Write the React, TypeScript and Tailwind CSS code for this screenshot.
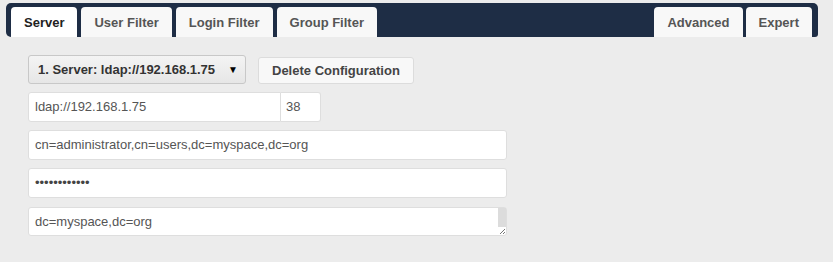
const LEFT_TABS = ['Server', 'User Filter', 'Login Filter', 'Group Filter'];
const RIGHT_TABS = ['Advanced', 'Expert'];

function Tab({ label, active }: { label: string; active?: boolean }) {
  return (
    <div
      className={`h-[30px] px-[13px] pt-[1px] flex items-center rounded-t-[4px] font-bold text-[13px] ${
        active ? 'bg-white text-[#222]' : 'bg-[#f8f8f8] text-[#555]'
      }`}
    >
      {label}
    </div>
  );
}

export default function App() {
  return (
    <div
      className="w-[833px] h-[262px] bg-[#ececec] pt-[3px] pl-[6px] pr-[15px]"
      style={{ fontFamily: '"Liberation Sans", Arial, sans-serif' }}
    >
      {/* Tab bar */}
      <div className="h-[34px] bg-[#1e2d45] rounded-[5px] rounded-br-[3px] flex items-end justify-between pl-[5px] pr-[6px]">
        <div className="flex gap-[4px]">
          {LEFT_TABS.map((t, i) => (
            <Tab key={t} label={t} active={i === 0} />
          ))}
        </div>
        <div className="flex gap-[3px]">
          {RIGHT_TABS.map(t => (
            <Tab key={t} label={t} />
          ))}
        </div>
      </div>

      {/* Form */}
      <div className="pl-[22px] pt-[18px] flex flex-col text-[13px] text-[#555]">
        <div className="flex items-center gap-[12px]">
          <div className="w-[218px] h-[29px] border border-[#c8c8c8] rounded-[3px] bg-gradient-to-b from-[#f4f4f4] to-[#e6e6e6] flex items-center justify-between pl-[9px] pr-[7px] font-bold text-[#333]">
            <span>1. Server: ldap://192.168.1.75</span>
            <span className="text-[10px] text-black">▼</span>
          </div>
          <div className="h-[27px] mt-[2px] px-[13px] border border-[#dcdcdc] rounded-[3px] bg-[#f8f8f8] flex items-center font-bold text-[#444]">
            Delete Configuration
          </div>
        </div>

        <div className="flex mt-[8px]">
          <div className="w-[253px] h-[30px] bg-white border border-[#dedede] rounded-l-[3px] flex items-center pl-[6px]">
            ldap://192.168.1.75
          </div>
          <div className="w-[40px] h-[30px] bg-white border border-l-0 border-[#dedede] rounded-r-[3px] flex items-center pl-[5px]">
            38
          </div>
        </div>

        <div className="w-[479px] h-[30px] mt-[8px] bg-white border border-[#dedede] rounded-[3px] flex items-center pl-[6px]">
          cn=administrator,cn=users,dc=myspace,dc=org
        </div>

        <div className="w-[479px] h-[30px] mt-[8px] bg-white border border-[#dedede] rounded-[3px] flex items-center pl-[6px] text-[13px] text-[#444]">
          ••••••••••••
        </div>

        <div className="w-[479px] h-[29px] mt-[9px] bg-white border border-[#dedede] rounded-[3px] flex">
          <div className="flex-1 flex items-center pl-[6px]">dc=myspace,dc=org</div>
          <div className="w-[8px] flex flex-col">
            <div className="flex-1 bg-[#dcdcdc]" />
            <svg width="8" height="8" viewBox="0 0 8 8" className="block">
              <path d="M7 2 L2 7 M7 5 L5 7" stroke="#777" strokeWidth="1" />
            </svg>
          </div>
        </div>
      </div>
    </div>
  );
}
